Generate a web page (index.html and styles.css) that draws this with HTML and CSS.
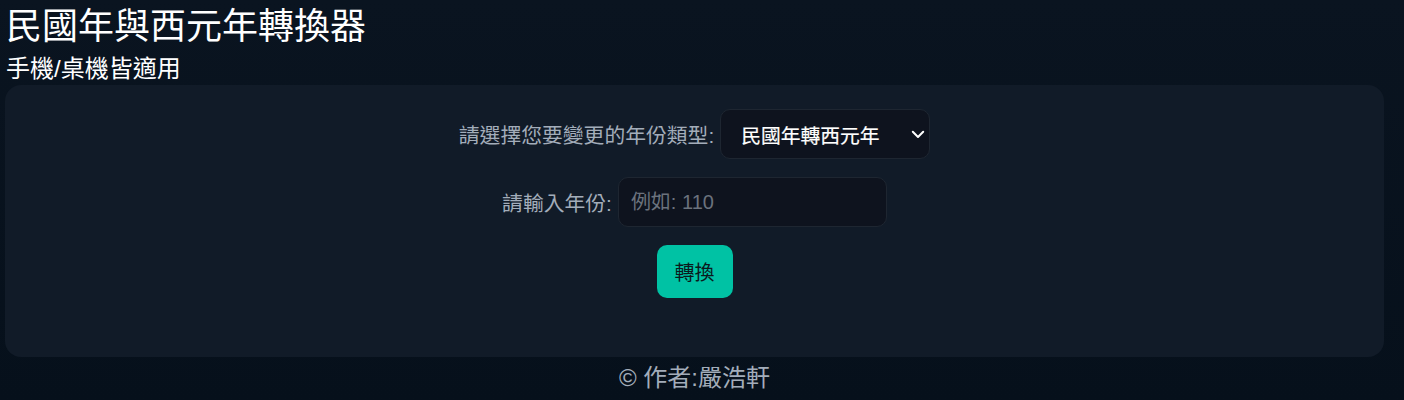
FILE: index.html
```html
<!DOCTYPE html>
<html lang="zh-Hant">
<head>
<meta charset="utf-8">
<title>民國年與西元年轉換器</title>
<link rel="stylesheet" href="styles.css">
</head>
<body>
  <header class="page-head">
    <h1 class="title">民國年與西元年轉換器</h1>
    <h2 class="subtitle">手機/桌機皆適用</h2>
  </header>
  <main class="card">
    <div class="row">
      <label class="label" for="type">請選擇您要變更的年份類型:</label>
      <div class="select">
        <span class="select-text">民國年轉西元年</span>
        <svg class="chevron" width="14" height="14" viewBox="0 0 14 14"><path d="M1.8 4.8 L7 10 L12.2 4.8" fill="none" stroke="#ffffff" stroke-width="2" stroke-linecap="round" stroke-linejoin="round"/></svg>
      </div>
    </div>
    <div class="row">
      <label class="label" for="year">請輸入年份:</label>
      <input class="input" id="year" type="text" placeholder="例如: 110">
    </div>
    <button class="btn" type="button">轉換</button>
    <div class="result"></div>
  </main>
  <footer class="footer">© 作者:嚴浩軒</footer>
</body>
</html>
```
FILE: styles.css
```css
html, body {
  margin: 0;
  padding: 0;
}
body {
  background: linear-gradient(180deg, #0a1420 0%, #06101b 100%);
  color: #ffffff;
  font-family: "Liberation Sans", "Noto Sans CJK TC", sans-serif;
  min-height: 400px;
  padding: 0 20px 0 5px;
  box-sizing: border-box;
}
.page-head {
  padding-left: 1px;
}
.title {
  margin: 0;
  font-size: 36px;
  font-weight: 400;
  line-height: 53px;
}
.subtitle {
  margin: 0;
  font-size: 24px;
  font-weight: 400;
  line-height: 32px;
}
.card {
  background: #111b28;
  border-radius: 16px;
  padding: 24px 0 59px;
  display: flex;
  flex-direction: column;
  align-items: center;
  gap: 18px;
}
.row {
  display: flex;
  align-items: center;
  gap: 6px;
}
.label {
  color: #a3adba;
  font-size: 20.8px;
}
.select {
  box-sizing: border-box;
  width: 210px;
  height: 50px;
  background: #0e131e;
  border: 1px solid #1e2631;
  border-radius: 10px;
  display: flex;
  align-items: center;
  justify-content: space-between;
  padding: 0 4px 0 20px;
}
.select-text {
  font-size: 19.8px;
  font-weight: 400;
  color: #ffffff;
  -webkit-text-stroke: 0.2px #ffffff;
}
.chevron {
  display: block;
}
.input {
  box-sizing: border-box;
  width: 269px;
  height: 50px;
  background: #0e131e;
  border: 1px solid #1e2631;
  border-radius: 10px;
  padding: 0 12px;
  font-family: inherit;
  font-size: 20px;
  color: #ffffff;
  outline: none;
}
.input::placeholder {
  color: #6b727d;
}
.btn {
  width: 76px;
  height: 53px;
  border: none;
  border-radius: 10px;
  background: #00c2a4;
  color: #0b1a1d;
  font-family: inherit;
  font-size: 20px;
  padding: 0;
}
.result {
  display: none;
}
.footer {
  text-align: center;
  color: #a3adba;
  font-size: 24px;
  line-height: 42px;
}
```
